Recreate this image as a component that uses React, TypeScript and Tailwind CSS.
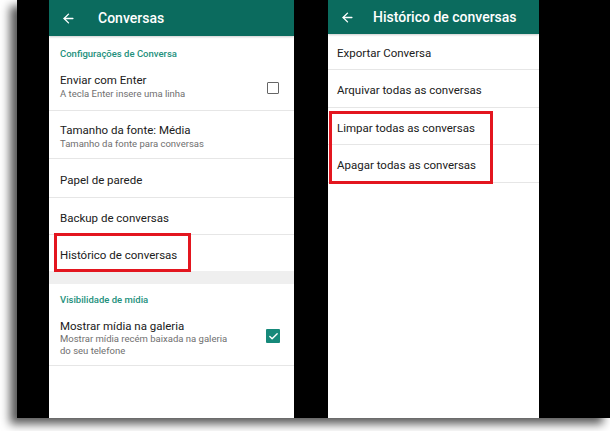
import { ArrowLeft, Check } from 'lucide-react';

const font = { fontFamily: 'Roboto, "Noto Sans", sans-serif' };

function Header({ title }: { title: string }) {
    return (
        <div className="flex h-[36px] items-center bg-[#0b6b5e] px-[12px] text-white shadow-[0_1px_2px_rgba(0,0,0,0.2)]">
            <ArrowLeft className="h-[15px] w-[15px]" strokeWidth={2.2} />
            <span className="ml-[22px] text-[14px] font-medium leading-none">{title}</span>
        </div>
    );
}

function Row({ title, sub, h }: { title: string; sub?: string[]; h: string }) {
    return (
        <div className={`flex flex-col justify-center border-b border-[#e6e6e6] px-[11px] pt-[3px] ${h}`}>
            <div className="text-[11.5px] leading-[14px] text-[#202020]">{title}</div>
            {sub?.map((s) => (
                <div key={s} className="text-[9.5px] leading-[13px] text-[#6f6f6f]">
                    {s}
                </div>
            ))}
        </div>
    );
}

function LeftScreen() {
    return (
        <div className="flex h-full w-[245px] flex-col bg-white" style={font}>
            <Header title="Conversas" />
            <div className="flex h-[29px] items-end px-[11px] pb-[4px] text-[9.5px] font-medium text-[#23907c]">
                Configurações de Conversa
            </div>
            <div className="flex h-[46px] items-center justify-between border-b border-[#e6e6e6] pl-[11px] pr-[15px]">
                <div className="-mt-[2px] flex flex-col">
                    <div className="text-[11.5px] leading-[14px] text-[#202020]">Enviar com Enter</div>
                    <div className="text-[9.5px] leading-[13px] text-[#6f6f6f]">A tecla Enter insere uma linha</div>
                </div>
                <div className="h-[12px] w-[12px] rounded-[1px] border-[1.5px] border-[#666]" />
            </div>
            <Row title="Tamanho da fonte: Média" sub={['Tamanho da fonte para conversas']} h="h-[48px]" />
            <Row title="Papel de parede" h="h-[39px]" />
            <Row title="Backup de conversas" h="h-[37px]" />
            <div className="relative flex h-[36px] items-center px-[11px] pt-[3px]">
                <div className="pointer-events-none absolute left-[5px] top-[-2px] h-[39px] w-[137px] border-[3px] border-[#e3161f]" />
                <span className="text-[11.5px] leading-[14px] text-[#202020]">Histórico de conversas</span>
            </div>
            <div className="h-[13px] bg-[#efefef]" />
            <div className="flex h-[30px] items-center px-[11px] pt-[3px] text-[9.5px] font-medium text-[#23907c]">
                Visibilidade de mídia
            </div>
            <div className="flex h-[52px] items-start justify-between border-b border-[#e6e6e6] pl-[11px] pr-[14px] pt-[5px]">
                <div className="flex flex-col">
                    <div className="text-[11.5px] leading-[14px] text-[#202020]">Mostrar mídia na galeria</div>
                    <div className="text-[9.5px] leading-[12px] text-[#6f6f6f]">Mostrar mídia recém baixada na galeria</div>
                    <div className="text-[9.5px] leading-[12px] text-[#6f6f6f]">do seu telefone</div>
                </div>
                <div className="mt-[10px] flex h-[14px] w-[14px] items-center justify-center rounded-[1px] bg-[#16897a]">
                    <Check className="h-[11px] w-[11px] text-white" strokeWidth={3} />
                </div>
            </div>
            <div className="flex-1" />
        </div>
    );
}

function RightScreen() {
    const items: [string, string][] = [
        ['Exportar Conversa', 'h-[36px]'],
        ['Arquivar todas as conversas', 'h-[38px]'],
        ['Limpar todas as conversas', 'h-[37px]'],
        ['Apagar todas as conversas', 'h-[38px]'],
    ];
    return (
        <div className="flex h-full w-[211px] flex-col bg-white" style={font}>
            <div className="flex h-[34px] items-center bg-[#0b6b5e] px-[12px] text-white shadow-[0_1px_2px_rgba(0,0,0,0.2)]">
                <ArrowLeft className="h-[15px] w-[15px]" strokeWidth={2.2} />
                <span className="ml-[18px] text-[14px] font-medium leading-none">Histórico de conversas</span>
            </div>
            <div className="relative flex flex-col">
                {items.map(([t, h]) => (
                    <div key={t} className={`flex items-center border-b border-[#e6e6e6] px-[9px] pt-[3px] ${h}`}>
                        <span className="text-[11.5px] leading-[14px] text-[#202020]">{t}</span>
                    </div>
                ))}
                <div className="pointer-events-none absolute left-[1px] top-[77px] h-[73px] w-[164px] border-[3px] border-[#e3161f]" />
            </div>
            <div className="flex-1" />
        </div>
    );
}

export default function App() {
    return (
        <div className="h-[431px] w-[610px] overflow-hidden bg-white pl-[17px]">
            <div className="flex h-[418px] w-[593px] bg-black pl-[32px] shadow-[-7px_6px_9px_rgba(0,0,0,0.65)]">
                <LeftScreen />
                <div className="w-[34px]" />
                <RightScreen />
            </div>
        </div>
    );
}
